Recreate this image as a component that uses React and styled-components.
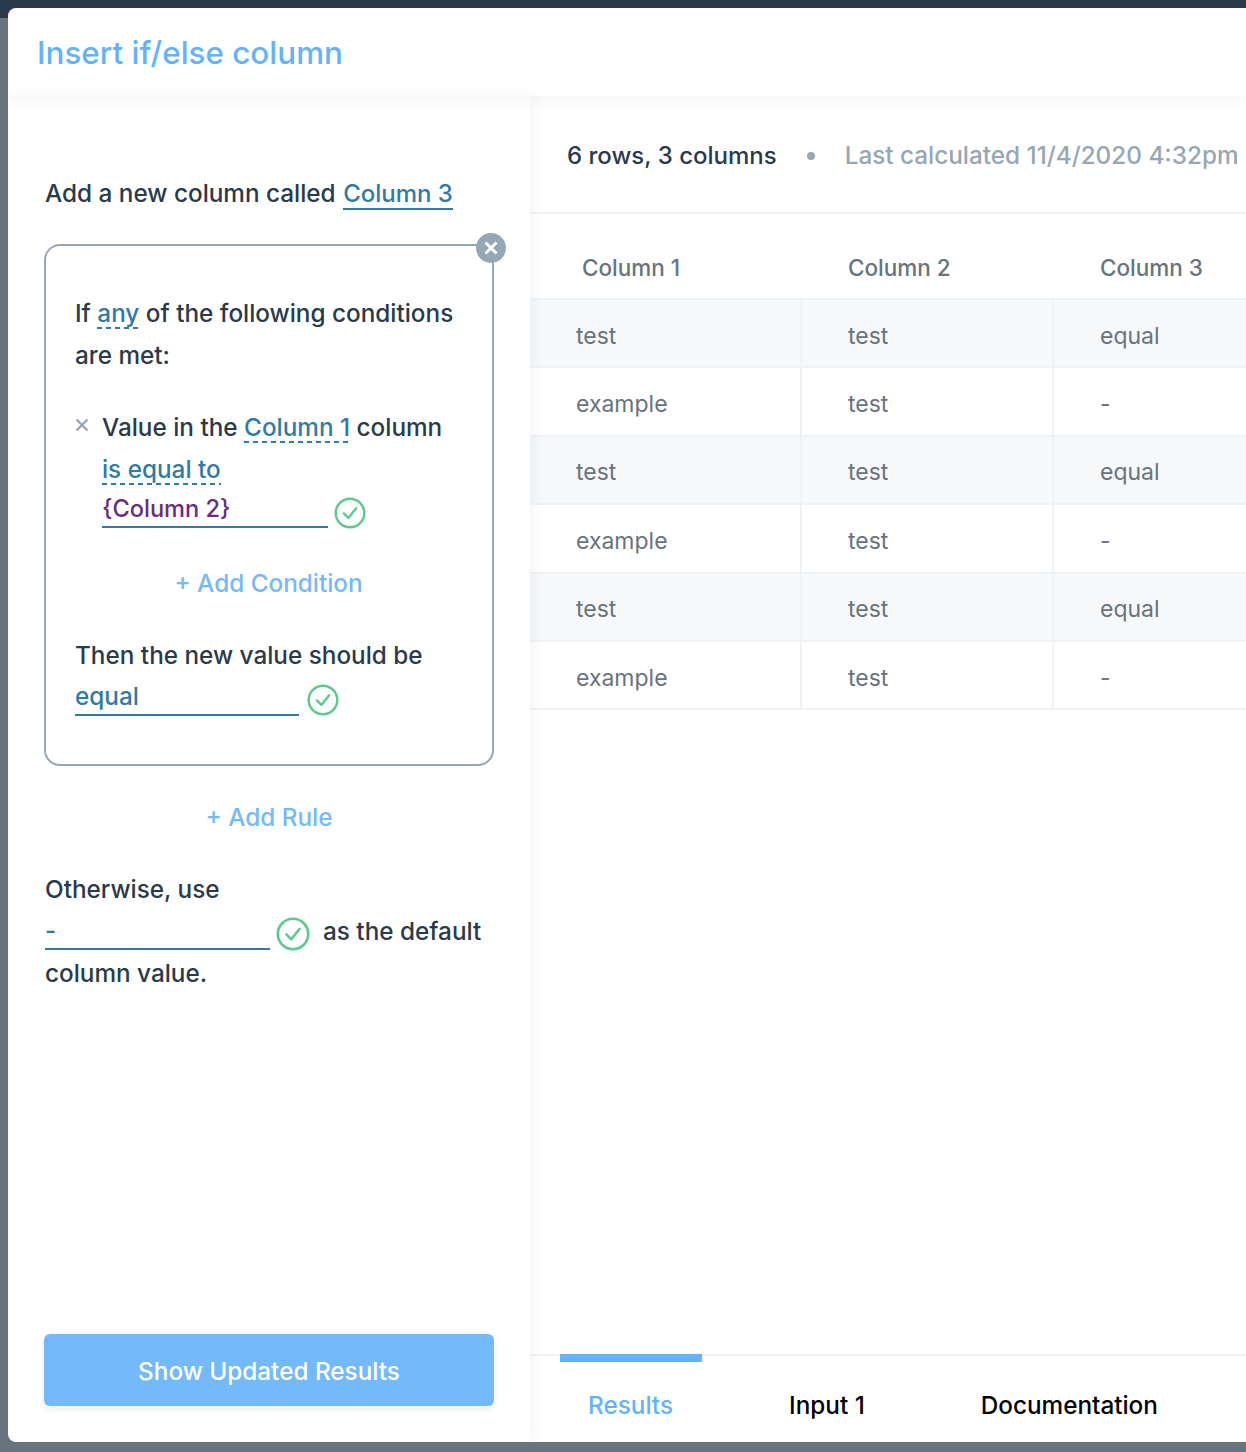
import React from "react";
import styled, { createGlobalStyle } from "styled-components";

const Global = createGlobalStyle`
  html, body { margin: 0; padding: 0; background: #67737e; }
  * { box-sizing: border-box; }
`;

const Page = styled.div`
  width: 1246px;
  height: 1452px;
  overflow: hidden;
  padding: 8px 0 10px 8px;
  background: linear-gradient(to bottom, #2a3a4a 0, #2a3a4a 18px, #67737e 18px);
  font-family: Inter, "Noto Sans", sans-serif;
  font-size: 24.3px;
  font-weight: 450;
  color: #2a3a4a;
  position: relative;
`;
const TopBar = styled.div`
  position: absolute;
  left: 0; right: 0; top: 0;
  height: 8px;
  background: #2a3a4a;
`;
const Modal = styled.div`
  position: relative;
  height: 1434px;
  display: flex;
  flex-direction: column;
  background: #fff;
  border-radius: 8px 0 0 8px;
  overflow: hidden;
`;
const Header = styled.header`
  flex: 0 0 88px;
  display: flex;
  align-items: center;
  padding: 1px 0 0 29px;
  font-size: 31.4px;
  color: #63b3fc;
  position: relative;
  z-index: 2;
  box-shadow: 0 2px 14px rgba(42, 58, 74, 0.07);
`;
const Body = styled.div`
  flex: 1;
  display: flex;
  min-height: 0;
`;
const Left = styled.aside`
  flex: 0 0 522px;
  display: flex;
  flex-direction: column;
  padding: 76px 36px 36px 37px;
  line-height: 42px;
  position: relative;
  z-index: 1;
  box-shadow: 2px 0 14px rgba(42, 58, 74, 0.06);
`;
const Line = styled.div`
  white-space: nowrap;
  margin-top: ${(p) => p.$mt || 0}px;
`;
const Solid = styled.span`
  color: #2f7ba5;
  border-bottom: 2px solid #2f7ba5;
  margin-left: 1px;
  font-size: 24px;
`;
const Dashed = styled.span`
  color: #2f7ba5;
  background-image: linear-gradient(to right, #2f7ba5 60%, transparent 60%);
  background-size: 9px 2px;
  background-repeat: repeat-x;
  background-position: 0 100%;
  padding-bottom: 1px;
`;
const Card = styled.section`
  position: relative;
  width: 450px;
  height: 522px;
  margin: 29px 0 0 -1px;
  padding: 46px 20px 0 29px;
  border: 2px solid #97a6b4;
  border-radius: 16px;
`;
const Close = styled.button`
  position: absolute;
  top: -13px;
  right: -14px;
  width: 30px;
  height: 30px;
  padding: 0;
  border: 0;
  border-radius: 50%;
  background: #97a6b4;
  display: flex;
  align-items: center;
  justify-content: center;
`;
const Condition = styled.div`
  display: flex;
  margin-top: 30px;
`;
const Remove = styled.div`
  flex: 0 0 27px;
  padding-top: 12px;
  line-height: 0;
`;
const Fields = styled.div`
  min-width: 0;
`;
const FieldRow = styled.div`
  display: flex;
  align-items: flex-start;
  height: 42px;
`;
const Field = styled.div`
  width: ${(p) => p.$w}px;
  height: ${(p) => p.$h}px;
  line-height: ${(p) => p.$lh}px;
  font-size: ${(p) => p.$fs || 24.3}px;
  color: ${(p) => p.$color || "#2f7ba5"};
  border-bottom: 2px solid #2f7ba5;
  flex: none;
`;
const Check = styled.svg`
  flex: none;
  margin-left: ${(p) => p.$ml}px;
  margin-top: ${(p) => p.$mt}px;
`;
const AddLink = styled.div`
  color: #74b9f9;
  text-align: center;
  margin-top: ${(p) => p.$mt}px;
  margin-left: ${(p) => p.$ml || 0}px;
`;
const Trailing = styled.span`
  margin-left: 13px;
  flex: none;
`;
const Submit = styled.button`
  margin-top: auto;
  margin-left: -1px;
  width: 450px;
  height: 72px;
  padding: 2px 0 0;
  border: 0;
  border-radius: 6px;
  background: #74b9f9;
  color: #fff;
  font: inherit;
  box-shadow: 0 3px 6px rgba(42, 58, 74, 0.1);
`;
const Right = styled.main`
  flex: 1;
  min-width: 0;
  display: flex;
  flex-direction: column;
`;
const Stats = styled.div`
  flex: 0 0 118px;
  display: flex;
  align-items: center;
  padding: 2px 0 0 37px;
  border-bottom: 2px solid #f0f3f6;
  white-space: nowrap;
  font-size: 24px;
`;
const Dot = styled.span`
  flex: none;
  width: 8px;
  height: 8px;
  border-radius: 50%;
  background: #97a6b4;
  margin: 2px 30px 0 30px;
`;
const Muted = styled.span`
  color: #97a6b4;
  font-size: 24.3px;
`;
const Grid = styled.div`
  flex: 1;
  display: grid;
  grid-template-columns: 272px 252px 1fr;
  grid-template-rows: 86px;
  grid-auto-rows: 68.4px;
  align-content: start;
  font-size: 23px;
  font-weight: 400;
  color: #67737e;
`;
const HeadCell = styled.div`
  display: flex;
  align-items: center;
  padding: 22px 0 0 ${(p) => (p.$first ? 52 : 46)}px;
  border-bottom: 2px solid #f0f3f6;
  font-size: 22.5px;
  font-weight: 450;
`;
const Cell = styled.div`
  display: flex;
  align-items: center;
  padding: 5px 0 0 46px;
  background: ${(p) => (p.$alt ? "#f7f8fa" : "#fff")};
  border-bottom: 2px solid #f0f3f6;
  border-right: ${(p) => (p.$last ? 0 : "2px solid #f0f3f6")};
`;
const Tabs = styled.nav`
  flex: 0 0 88px;
  display: flex;
  gap: 59px;
  padding-left: 30px;
  border-top: 2px solid #f0f3f6;
  margin-top: auto;
`;
const Tab = styled.div`
  padding: 22px 29px 0 28px;
  height: 86px;
  line-height: 42px;
  white-space: nowrap;
  color: ${(p) => (p.$active ? "#63b3fc" : "#000")};
  border-top: 8px solid ${(p) => (p.$active ? "#63b3fc" : "transparent")};
  margin-top: -2px;
`;

const CheckIcon = ({ size = 34, ml, mt }) => (
  <Check $ml={ml} $mt={mt} width={size} height={size} viewBox="0 0 34 34" fill="none" stroke="#5cc98f" strokeWidth="2.6">
    <circle cx="17" cy="17" r="15.2" />
    <path d="M10.5 17.5l4.8 4.8L23.5 12" strokeLinecap="round" strokeLinejoin="round" />
  </Check>
);

const rows = [
  ["test", "test", "equal"],
  ["example", "test", "-"],
  ["test", "test", "equal"],
  ["example", "test", "-"],
  ["test", "test", "equal"],
  ["example", "test", "-"],
];

export default function App() {
  return (
    <Page>
      <Global />
      <TopBar />
      <Modal>
        <Header>Insert if/else column</Header>
        <Body>
          <Left>
            <Line>
              Add a new column called <Solid>Column 3</Solid>
            </Line>
            <Card>
              <Close aria-label="Remove rule">
                <svg width="16" height="16" viewBox="0 0 16 16" fill="none" stroke="#fff" strokeWidth="3">
                  <path d="M2.5 2.5l11 11M13.5 2.5l-11 11" />
                </svg>
              </Close>
              <Line>
                If <Dashed>any</Dashed> of the following conditions
              </Line>
              <Line>are met:</Line>
              <Condition>
                <Remove>
                  <svg width="14" height="14" viewBox="0 0 14 14" fill="none" stroke="#97a6b4" strokeWidth="2.4">
                    <path d="M1.5 1.5l11 11M12.5 1.5l-11 11" />
                  </svg>
                </Remove>
                <Fields>
                  <Line>
                    Value in the <Dashed>Column 1</Dashed> column
                  </Line>
                  <Line>
                    <Dashed>is equal to</Dashed>
                  </Line>
                  <FieldRow>
                    <Field $w={226} $h={38} $lh={38} $fs={23.6} $color="#6b2c7e">{"{Column 2}"}</Field>
                    <CheckIcon size={32} ml={6} mt={7} />
                  </FieldRow>
                </Fields>
              </Condition>
              <AddLink $mt={30} $ml={-10}>+ Add Condition</AddLink>
              <Line $mt={30}>Then the new value should be</Line>
              <FieldRow>
                <Field $w={224} $h={40} $lh={40}>equal</Field>
                <CheckIcon size={32} ml={8} mt={8} />
              </FieldRow>
            </Card>
            <AddLink $mt={30} $ml={-1}>+ Add Rule</AddLink>
            <Line $mt={30}>Otherwise, use</Line>
            <FieldRow>
              <Field $w={225} $h={40} $lh={40}>-</Field>
              <CheckIcon size={34} ml={6} mt={7} />
              <Trailing>as the default</Trailing>
            </FieldRow>
            <Line>column value.</Line>
            <Submit>Show Updated Results</Submit>
          </Left>
          <Right>
            <Stats>
              <span>6 rows, 3 columns</span>
              <Dot />
              <Muted>Last calculated 11/4/2020 4:32pm</Muted>
            </Stats>
            <Grid>
              <HeadCell $first>Column 1</HeadCell>
              <HeadCell>Column 2</HeadCell>
              <HeadCell>Column 3</HeadCell>
              {rows.map((r, i) =>
                r.map((c, j) => (
                  <Cell key={`${i}-${j}`} $alt={i % 2 === 0} $last={j === 2}>{c}</Cell>
                ))
              )}
            </Grid>
            <Tabs>
              <Tab $active>Results</Tab>
              <Tab>Input 1</Tab>
              <Tab>Documentation</Tab>
            </Tabs>
          </Right>
        </Body>
      </Modal>
    </Page>
  );
}
